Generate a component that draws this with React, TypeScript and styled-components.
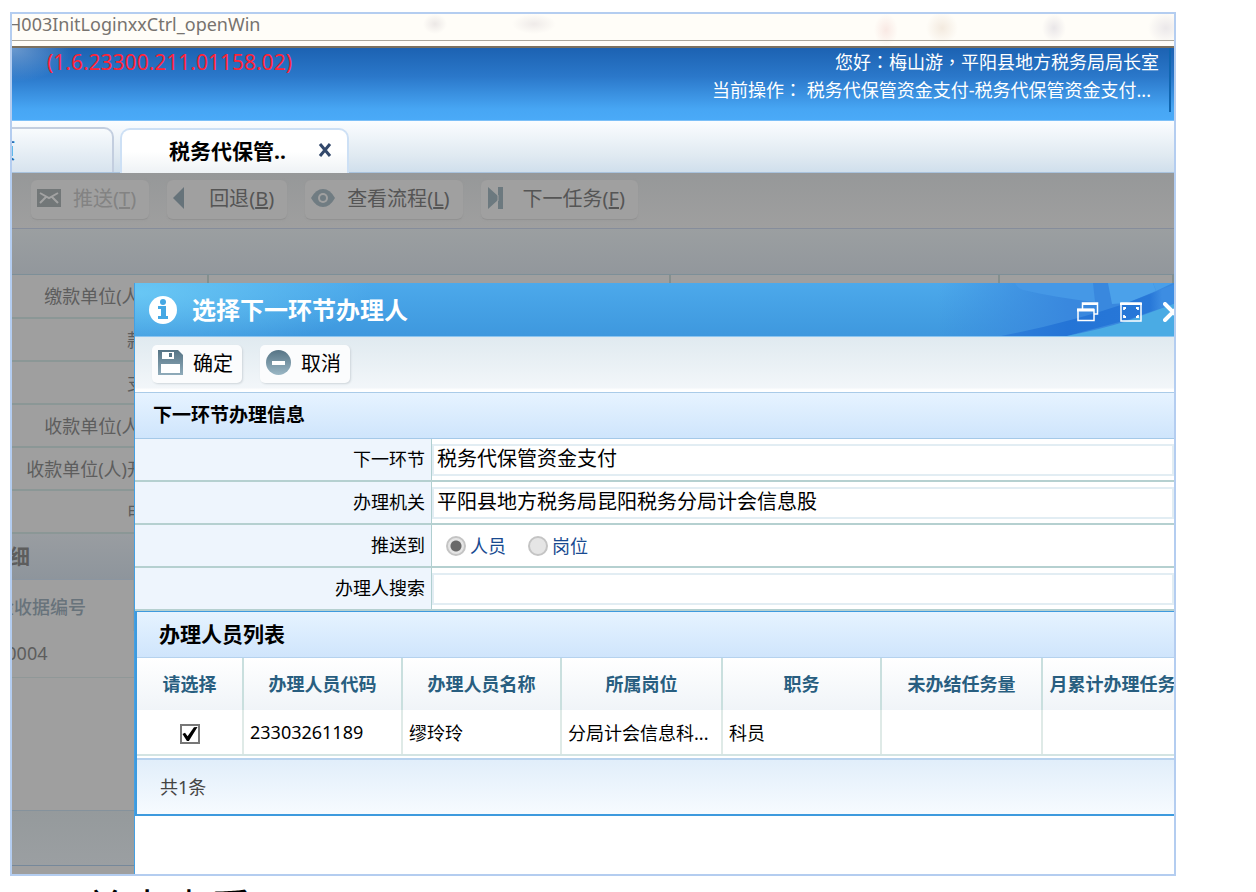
import React from "react";
import styled, { createGlobalStyle, css } from "styled-components";

const sans = `"Noto Sans", "Noto Sans CJK SC", sans-serif`;

const GlobalStyle = createGlobalStyle`
  *, *::before, *::after { box-sizing: border-box; }
  body { margin: 0; background: #fff; color: #000; font-family: ${sans}; font-size: 18px; }
  button, input { font-family: inherit; }
`;

/* ---------- outer page ---------- */

const Sheet = styled.main`
  display: flex;
  flex-direction: column;
  height: 100vh;
  padding: 12px 80px 0 10px;
  overflow: hidden;
`;

const Frame = styled.section`
  flex: 1;
  min-height: 0;
  display: flex;
  flex-direction: column;
  border: 2px solid #b4cdf0;
  overflow: hidden;
`;

const Caption = styled.p`
  flex: none;
  height: 16px;
  margin: 0;
  padding-left: 74px;
  font-family: "Noto Sans CJK SC", sans-serif;
  font-size: 42px;
  line-height: 62px;
  white-space: nowrap;
`;

/* The page behind the dialog is scrolled sideways inside the frame. */
const Scrolled = styled.div`
  flex: none;
  margin-left: -130px;
`;

const AddressBar = styled.div`
  height: 34px;
  border-bottom: 2px solid #7b705f;
  background:
    linear-gradient(#aaa69c, #aaa69c) 0 26px / 100% 1px no-repeat,
    radial-gradient(ellipse 12px 10px at 553px 10px, #ece8e6, transparent),
    radial-gradient(ellipse 22px 10px at 652px 10px, #efebe9, transparent),
    radial-gradient(ellipse 12px 16px at 1004px 16px, #f9e9e4, transparent),
    radial-gradient(ellipse 16px 16px at 1060px 14px, #f3eadf, transparent),
    radial-gradient(ellipse 12px 14px at 1172px 14px, #e9e6e8, transparent),
    radial-gradient(ellipse 18px 16px at 1284px 14px, #ebe8ea, transparent),
    #fffdf8;
  padding-left: 126px;
  font-size: 18px;
  line-height: 20px;
  color: #77736f;
`;

const Banner = styled.header`
  display: flex;
  justify-content: space-between;
  height: 73px;
  padding: 0 3px 0 165px;
  border-bottom: 1px solid #7cc0f8;
  background:
    radial-gradient(ellipse 60px 34px at 130px 0, rgba(160, 190, 225, 0.6), transparent),
    linear-gradient(#1c62b2, #2b78ca 40%, #47a6f4 85%, #4aaaf8);
  line-height: 28px;
`;

const Version = styled.span`
  color: #ff2438;
  font-size: 21px;
`;

const UserInfo = styled.div`
  height: 64px;
  padding-right: 10px;
  border-right: 2px solid #0f66b0;
  color: #fff;
  text-align: right;
  white-space: nowrap;

  div { height: 28px; line-height: 26px; }
  div + div { padding-right: 8px; }
`;

const Mid = styled.span`
  font-family: "Noto Sans CJK TC", sans-serif;
`;

const Tabs = styled.nav`
  display: flex;
  align-items: flex-end;
  gap: 6px;
  height: 52px;
  padding-left: 3px;
  border-bottom: 1px solid #a9c3de;
  background: linear-gradient(#fbfdff, #dfe9f1 70%, #d0dfec);
`;

const Tab = styled.button<{ $active?: boolean }>`
  display: flex;
  align-items: center;
  justify-content: center;
  gap: 32px;
  width: 229px;
  height: 45px;
  padding: 0 10px 3px 0;
  border: 2px solid #c3cedf;
  border-bottom: 0;
  border-radius: 10px 10px 0 0;
  background: linear-gradient(#f8fbfd, #d7e3ee);
  color: #2a6bb0;
  font-size: 21px;
  font-weight: 500;
  ${(p) =>
    p.$active &&
    css`
      margin-bottom: -1px;
      padding: 0 14px 3px 47px;
      justify-content: flex-start;
      border-color: #cde0f5;
      background: linear-gradient(#fff 50%, #eef2f5);
      color: #000;
      font-weight: 700;
    `}
`;

/* ---------- dimmed page ---------- */

const Work = styled.div`
  position: relative;
  flex: 1;
  min-height: 0;
  display: flex;
  flex-direction: column;
  overflow: hidden;
  background: #9f9f9f;
  color: #5d5d5d;
`;

const Dimmed = styled.div`
  flex: 1;
  display: flex;
  flex-direction: column;
  margin-left: -130px;
`;

const DimToolbar = styled.div`
  display: flex;
  gap: 18px;
  height: 56px;
  padding: 7px 0 9px 149px;
  border-bottom: 1px solid #868d9b;
  background: linear-gradient(#969899, #9f9f9f);
`;

const DimButton = styled.button`
  display: flex;
  align-items: center;
  gap: 12px;
  height: 40px;
  padding: 0 13px 4px 6px;
  border: 0;
  border-bottom: 1px solid #929292;
  border-radius: 6px;
  background: #a0a0a0;
  box-shadow: 0 0 2px #979797;
  color: #555;
  font-size: 20px;
  white-space: nowrap;

  &:disabled { color: #838383; }
  svg { display: block; }
`;

const DimStrip = styled.div`
  height: 46px;
  border-bottom: 1px solid #7d8f98;
  background: linear-gradient(#9b9fa1, #92979c);
`;

const DimTable = styled.table`
  width: 100%;
  table-layout: fixed;
  border-collapse: collapse;

  th, td {
    height: 43px;
    border-bottom: 2px solid #8b9796;
    border-right: 2px solid #858f8e;
    padding: 0 8px 2px 0;
    white-space: nowrap;
  }
  th { font-weight: 400; text-align: right; }
`;

const DimHeading = styled.h2`
  height: 46px;
  margin: 0;
  padding-left: 106px;
  border-bottom: 1px solid #8b95a0;
  background: linear-gradient(#999da1, #8e959c);
  font-size: 21px;
  line-height: 45px;
`;

const DimGrid = styled.table`
  width: 100%;
  table-layout: fixed;
  border-collapse: collapse;

  th, td {
    padding: 0 0 0 114px;
    text-align: left;
    font-weight: 500;
  }
  th { height: 51px; color: #68737b; }
  th:first-child { border-right: 1px solid #949a9a; }
  td { height: 46px; padding-bottom: 2px; border-bottom: 1px solid #909898; font-weight: 400; }
`;

const DimFooter = styled.div`
  height: 56px;
  margin: auto 0 8px;
  border-top: 1px solid #85929c;
  border-bottom: 1px solid #76889a;
  background: linear-gradient(#959a9c, #9b9fa2);
`;

/* ---------- dialog ---------- */

const Dialog = styled.section`
  position: absolute;
  top: 110px;
  right: -24px;
  bottom: 0;
  left: 122px;
  display: flex;
  flex-direction: column;
  border-left: 1px solid #449fe2;
  background: #fff;
  color: #000;
`;

const TitleBar = styled.header`
  position: relative;
  display: flex;
  align-items: center;
  gap: 15px;
  height: 54px;
  padding: 0 15px 0 14px;
  border-bottom: 1px solid #8cc5f0;
  background:
    radial-gradient(ellipse 240px 60px at 0 10px, rgba(115, 210, 248, 0.75), transparent),
    linear-gradient(#4ca9eb, #3e98de);
  color: #fff;

  h1 {
    margin: 0;
    font-size: 24px;
    font-weight: 700;
    line-height: 54px;
  }
`;

const Art = styled.svg`
  position: absolute;
  top: 0;
  right: 0;
`;

const WindowButtons = styled.div`
  position: relative;
  display: flex;
  gap: 21px;
  margin-left: auto;
  padding-top: 4px;
`;

const IconButton = styled.button`
  display: block;
  padding: 0;
  border: 0;
  background: none;
  svg { display: block; }
`;

const DialogToolbar = styled.div`
  display: flex;
  gap: 18px;
  height: 56px;
  padding: 8px 0 8px 17px;
  border-bottom: 1px solid #aacbe8;
  background: linear-gradient(#e0eaf0, #f2f6f9 92%, #fff 96%);
`;

const ToolButton = styled.button`
  display: flex;
  align-items: center;
  gap: 10px;
  height: 38px;
  padding: 0 9px 4px 6px;
  border: 0;
  border-radius: 5px;
  background: #fbfcfd;
  box-shadow: 1px 1px 2px #cfd6db;
  font-size: 20px;
  color: #000;
  white-space: nowrap;
  svg { display: block; }
`;

const Heading = styled.h2<{ $grid?: boolean }>`
  height: 46px;
  margin: 0;
  padding-left: ${(p) => (p.$grid ? 22 : 18)}px;
  border-bottom: 1px solid ${(p) => (p.$grid ? "#b5d2ee" : "#a5c9e8")};
  background: linear-gradient(#e6f3ff, #cfe5fc);
  font-size: ${(p) => (p.$grid ? 21 : 19)}px;
  line-height: 45px;
`;

const Field = styled.div`
  display: grid;
  grid-template-columns: 297px 1fr;
  height: 43px;
  border-bottom: 2px solid #b5d0d0;
`;

const fieldLabel = css`
  padding-right: 6px;
  border-right: 1px solid #b0cfd0;
  background: #eef5fd;
  text-align: right;
  line-height: 41px;
`;

const FieldLabel = styled.label`${fieldLabel}`;
const FieldTitle = styled.span`${fieldLabel}`;

const FieldBody = styled.div`
  display: flex;
  align-items: center;
  padding-right: 24px;
`;

const TextInput = styled.input`
  width: 100%;
  height: 32px;
  padding: 0 4px 4px 3px;
  border: 2px solid #e2edf3;
  font-size: 20px;
  color: #000;
  background: #fff;
  outline: 0;
`;

const Choice = styled.label`
  display: flex;
  align-items: center;
  gap: 4px;
  margin-left: 14px;
  color: #184a90;
  line-height: 20px;

  & + & { margin-left: 22px; }
`;

const Radio = styled.input`
  appearance: none;
  width: 20px;
  height: 20px;
  margin: 0;
  border: 2px solid #c4c4c4;
  border-radius: 50%;
  background: #e5e5e5;

  &:checked { background: radial-gradient(circle, #6a6a6a 5px, #e5e5e5 6px); }
`;

const GridPanel = styled.div`
  border: solid #3d9ade;
  border-width: 1px 0 2px 2px;
`;

const Grid = styled.table`
  width: 100%;
  table-layout: fixed;
  border-collapse: collapse;

  th, td {
    padding: 0 5px 2px;
    border-right: 2px solid #dfeae7;
    white-space: nowrap;
  }
  thead { background: linear-gradient(#fff, #f0f4f8); }
  th { height: 52px; border-color: #c9dfde; color: #285e80; font-weight: 700; }
  td { height: 45px; padding: 0 6px 1px; border-bottom: 2px solid #d3e4e3; }
  td:first-child { text-align: center; }
`;

const Check = styled.input`
  appearance: none;
  display: inline-block;
  width: 20px;
  height: 20px;
  margin: 2px 0 0;
  border: 2px solid #777;
  background: #fff;
  vertical-align: middle;

  &:checked::before {
    content: "";
    display: block;
    width: 16px;
    height: 16px;
    background: #000;
    clip-path: polygon(6% 50%, 22% 42%, 38% 64%, 78% 8%, 100% 6%, 46% 94%, 34% 94%);
  }
`;

const GridFooter = styled.div`
  height: 56px;
  margin-top: 2px;
  padding-left: 23px;
  border-top: 2px solid #b7d2ee;
  background: linear-gradient(#e1eefa, #f7fbff);
  color: #444;
  line-height: 54px;
`;

/* ---------- icons ---------- */

const CloseTab = () => (
  <svg width="14" height="14" viewBox="0 0 14 14" aria-hidden="true">
    <path d="M2 1L12 13M12 1L2 13" stroke="#33486b" strokeWidth="3" />
  </svg>
);
const Mail = () => (
  <svg width="24" height="18" viewBox="0 0 24 18">
    <rect width="24" height="18" fill="#727778" />
    <path d="M3 4L12 9L21 4M3 14L9 8M21 14L15 8" stroke="#a3a3a3" strokeWidth="2" fill="none" />
  </svg>
);
const Back = () => (
  <svg width="24" height="22" viewBox="0 0 24 22">
    <path d="M11 0V22L0 11Z" fill="#66737a" />
  </svg>
);
const Eye = () => (
  <svg width="24" height="18" viewBox="0 0 24 18">
    <path d="M0 9Q5 0 12 0T24 9Q19 18 12 18T0 9Z" fill="#707c82" />
    <circle cx="12" cy="9" r="5" fill="#a0a0a0" />
    <circle cx="12" cy="9" r="3" fill="#707c82" />
  </svg>
);
const Next = () => (
  <svg width="24" height="22" viewBox="0 0 24 22">
    <path d="M1 0L11 9V0H16V22H11V13L1 22Z" fill="#6c797f" />
    <path d="M11 8V14" stroke="#a0a0a0" strokeWidth="1" />
  </svg>
);
const Info = () => (
  <svg width="28" height="28" viewBox="0 0 28 28">
    <circle cx="14" cy="14" r="14" fill="#fff" />
    <circle cx="14" cy="6" r="3" fill="#45a8e4" />
    <path d="M9 10H17V20H19V23H9V20H12V13H9Z" fill="#45a8e4" />
  </svg>
);
const Save = () => (
  <svg width="25" height="25" viewBox="0 0 25 25">
    <defs>
      <linearGradient id="steel" x1="0" y1="0" x2="0" y2="1">
        <stop offset="0" stopColor="#567485" />
        <stop offset="1" stopColor="#8fabba" />
      </linearGradient>
    </defs>
    <path d="M0 0H20L25 5V25H0Z" fill="url(#steel)" />
    <path d="M4 2H16V9H4ZM3 14H22V23H3Z" fill="#fff" />
    <path d="M11 3H14V7H11Z" fill="#567485" />
  </svg>
);
const Minus = () => (
  <svg width="25" height="25" viewBox="0 0 25 25">
    <defs>
      <linearGradient id="disc" x1="0" y1="0" x2="0" y2="1">
        <stop offset="0" stopColor="#567485" />
        <stop offset="1" stopColor="#9ab7c5" />
      </linearGradient>
    </defs>
    <circle cx="12.500" cy="12.500" r="12.500" fill="url(#disc)" />
    <rect x="6" y="11" width="13" height="4" fill="#fff" />
  </svg>
);
const Restore = () => (
  <svg width="22" height="20" viewBox="0 0 22 20" fill="none" stroke="#fff">
    <path d="M5.500 7V1H20.500V12H17" strokeWidth="1.500" />
    <path d="M5 2H21" strokeWidth="2" />
    <rect x="1" y="7.500" width="16" height="11" strokeWidth="1.500" />
    <path d="M0 8H17" strokeWidth="3" />
  </svg>
);
const Maximize = () => (
  <svg width="22" height="20" viewBox="0 0 22 20" fill="none" stroke="#fff">
    <rect x="1" y="1" width="20" height="18" strokeWidth="1.500" />
    <path d="M0 2H22" strokeWidth="2" />
    <path d="M4 8V6H6M16 6H18V8M18 13V15H16M6 15H4V13" strokeWidth="1.800" />
  </svg>
);
const Close = () => (
  <svg width="20" height="20" viewBox="0 0 20 20">
    <path d="M2 2L18 18M18 2L2 18" stroke="#fff" strokeWidth="4" strokeLinecap="round" />
  </svg>
);

/* ---------- data ---------- */

const tools = [
  { text: "推送", mark: "T", icon: <Mail />, disabled: true },
  { text: "回退", mark: "B", icon: <Back /> },
  { text: "查看流程", mark: "L", icon: <Eye /> },
  { text: "下一任务", mark: "F", icon: <Next /> },
];
const dimLabels = ["缴款单位(人)识别号", "款项类别", "支付方式", "收款单位(人)账户名", "收款单位(人)开户银行", "申请日期"];
const columns = ["请选择", "办理人员代码", "办理人员名称", "所属岗位", "职务", "未办结任务量", "月累计办理任务量"];
const widths = [106, 159, 159, 161, 159, 161, 159];
const people = [["23303261189", "缪玲玲", "分局计会信息科...", "科员", "", ""]];

export default function App() {
  return (
    <>
      <GlobalStyle />
      <Sheet>
        <Frame>
          <Scrolled>
            <AddressBar>H003InitLoginxxCtrl_openWin</AddressBar>
            <Banner>
              <Version>(1.6.23300.211.01158.02)</Version>
              <UserInfo>
                <div>您好<Mid>：</Mid>梅山游<Mid>，</Mid>平阳县地方税务局局长室</div>
                <div>当前操作<Mid>：</Mid> 税务代保管资金支付-税务代保管资金支付...</div>
              </UserInfo>
            </Banner>
            <Tabs>
              <Tab type="button">首页</Tab>
              <Tab type="button" $active>税务代保管..<CloseTab /></Tab>
            </Tabs>
          </Scrolled>
          <Work>
            <Dimmed>
              <DimToolbar>
                {tools.map((t) => (
                  <DimButton key={t.mark} type="button" disabled={t.disabled}>
                    {t.icon}
                    <span>{t.text}(<u>{t.mark}</u>)</span>
                  </DimButton>
                ))}
              </DimToolbar>
              <DimStrip />
              <DimTable>
                <colgroup>
                  <col width="326" /><col width="462" /><col width="329" /><col />
                </colgroup>
                <tbody>
                  {dimLabels.map((l, i) => (
                    <tr key={i}><th scope="row">{l}</th><td /><td /><td /></tr>
                  ))}
                </tbody>
              </DimTable>
              <DimHeading>明细</DimHeading>
              <DimGrid>
                <colgroup><col width="251" /><col /></colgroup>
                <thead><tr><th>金收据编号</th><th /></tr></thead>
                <tbody><tr><td>00004</td><td /></tr></tbody>
              </DimGrid>
              <DimFooter />
            </Dimmed>

            <Dialog role="dialog" aria-labelledby="dialog-title">
              <TitleBar>
                <Art width="260" height="53" viewBox="-60 0 260 53" aria-hidden="true">
                  <defs>
                    <linearGradient id="fade" x1="0" y1="0" x2="1" y2="0">
                      <stop offset="0" stopColor="#3988de" stopOpacity="0" />
                      <stop offset="0.5" stopColor="#3988de" />
                    </linearGradient>
                    <linearGradient id="band" gradientUnits="userSpaceOnUse" x1="0" y1="0" x2="200" y2="0">
                      <stop offset="0" stopColor="#2f80da" />
                      <stop offset="0.35" stopColor="#2474d6" />
                      <stop offset="0.76" stopColor="#2878d8" />
                      <stop offset="0.82" stopColor="#3d8de2" />
                    </linearGradient>
                  </defs>
                  <rect x="-60" width="260" height="53" fill="url(#fade)" />
                  <path d="M17 0H95L97 19Q60 15 25 7Q19 5 17 0Z" fill="#4598e6" />
                  <path d="M110 0H155L158 8L129 20L114 21Z" fill="#4ba1ea" />
                  <path d="M155 0H175L158 8Z" fill="#4a9fe8" />
                  <path d="M3 53Q70 40 129 20L180 0H200V12L129 37L69 53Z" fill="url(#band)" />
                  <path d="M69 53Q104 46 129 38L200 12V53Z" fill="#4aabe4" />
                </Art>
                <Info />
                <h1 id="dialog-title">选择下一环节办理人</h1>
                <WindowButtons>
                  <IconButton type="button" aria-label="还原"><Restore /></IconButton>
                  <IconButton type="button" aria-label="最大化"><Maximize /></IconButton>
                  <IconButton type="button" aria-label="关闭"><Close /></IconButton>
                </WindowButtons>
              </TitleBar>
              <DialogToolbar>
                <ToolButton type="button"><Save />确定</ToolButton>
                <ToolButton type="button"><Minus />取消</ToolButton>
              </DialogToolbar>
              <Heading>下一环节办理信息</Heading>
              <Field>
                <FieldLabel htmlFor="step">下一环节</FieldLabel>
                <FieldBody><TextInput id="step" defaultValue="税务代保管资金支付" /></FieldBody>
              </Field>
              <Field>
                <FieldLabel htmlFor="office">办理机关</FieldLabel>
                <FieldBody><TextInput id="office" defaultValue="平阳县地方税务局昆阳税务分局计会信息股" /></FieldBody>
              </Field>
              <Field role="radiogroup" aria-labelledby="target">
                <FieldTitle id="target">推送到</FieldTitle>
                <FieldBody>
                  <Choice><Radio type="radio" name="target" defaultChecked />人员</Choice>
                  <Choice><Radio type="radio" name="target" />岗位</Choice>
                </FieldBody>
              </Field>
              <Field>
                <FieldLabel htmlFor="search">办理人搜索</FieldLabel>
                <FieldBody><TextInput id="search" /></FieldBody>
              </Field>
              <GridPanel>
                <Heading $grid>办理人员列表</Heading>
                <Grid>
                  <colgroup>{widths.map((w, i) => <col key={i} width={w} />)}</colgroup>
                  <thead>
                    <tr>{columns.map((c) => <th key={c} scope="col">{c}</th>)}</tr>
                  </thead>
                  <tbody>
                    {people.map((row) => (
                      <tr key={row[0]}>
                        <td><Check type="checkbox" defaultChecked aria-label={row[1]} /></td>
                        {row.map((v, i) => <td key={i}>{v}</td>)}
                      </tr>
                    ))}
                  </tbody>
                </Grid>
                <GridFooter>共1条</GridFooter>
              </GridPanel>
            </Dialog>
          </Work>
        </Frame>
        <Caption>单击查看</Caption>
      </Sheet>
    </>
  );
}
